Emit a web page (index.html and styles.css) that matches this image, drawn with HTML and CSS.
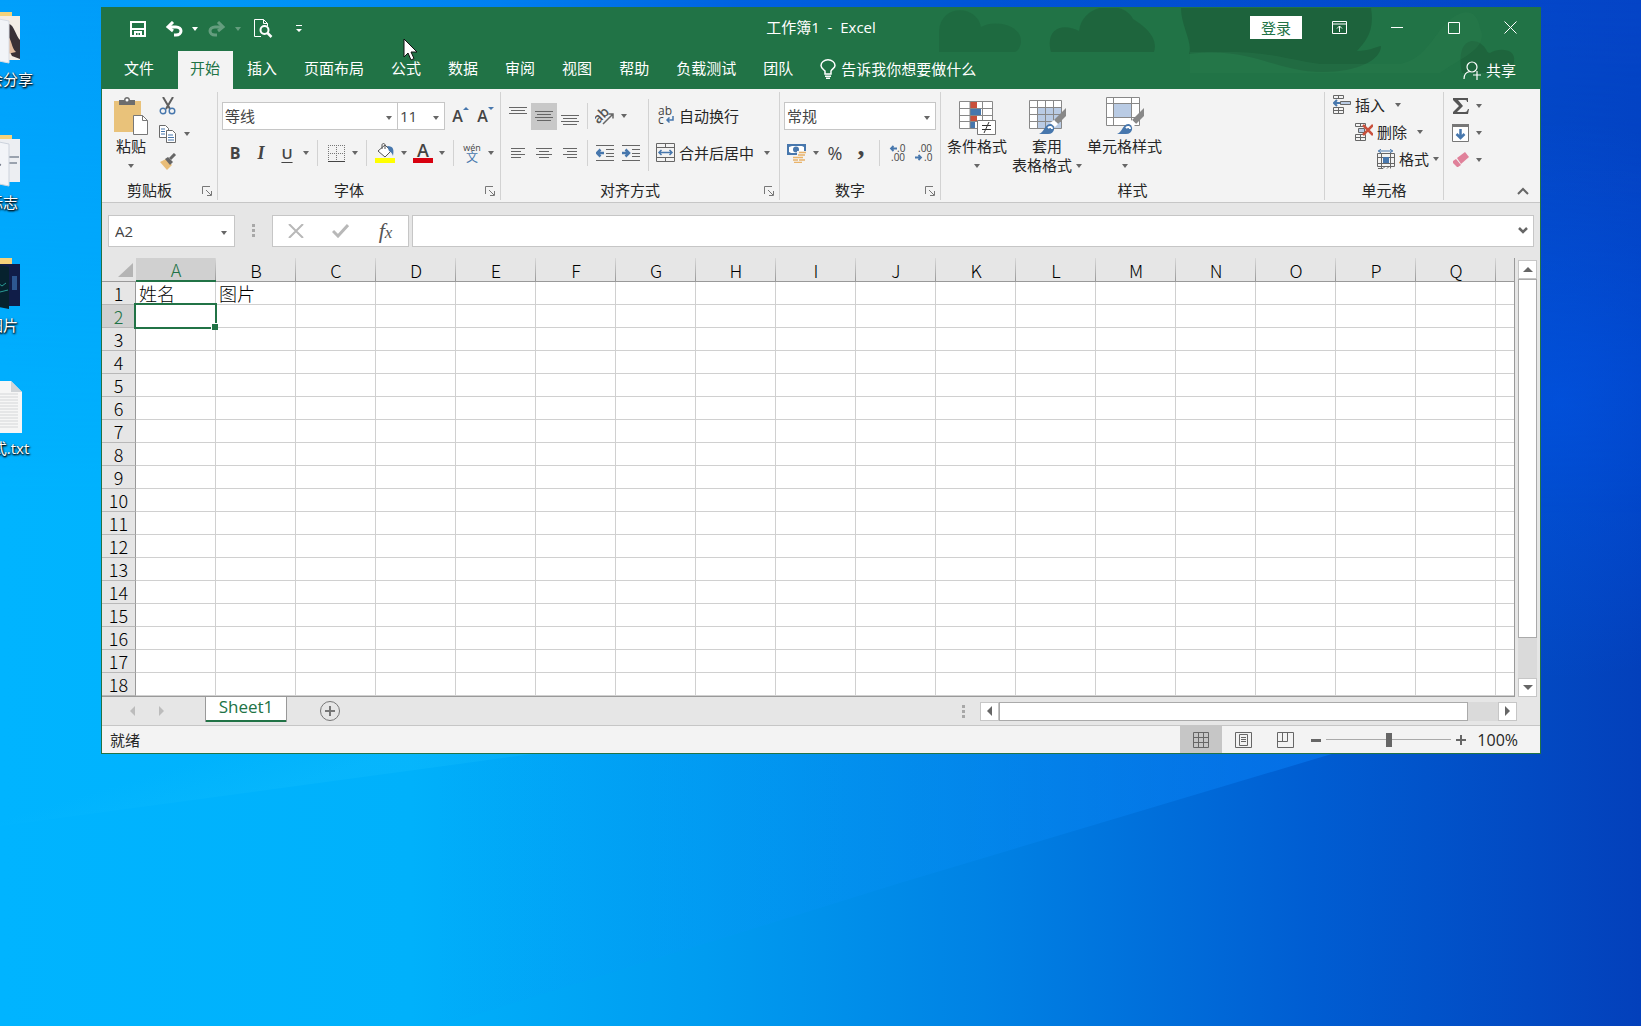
FILE: index.html
```html
<!DOCTYPE html>
<html lang="zh-CN">
<head>
<meta charset="utf-8">
<title>工作簿1 - Excel</title>
<link rel="stylesheet" href="styles.css">
</head>
<body>
<main class="desktop">
  <svg class="wallpaper" viewBox="0 0 1641 1026" preserveAspectRatio="none" aria-hidden="true">
    <defs>
      <linearGradient id="base" x1="0" x2="1" y1="0" y2="0">
        <stop offset="0" stop-color="#00b4ff"/><stop offset=".25" stop-color="#00b1fb"/><stop offset=".43" stop-color="#009cf0"/>
        <stop offset=".6" stop-color="#0082e4"/><stop offset=".8" stop-color="#005dd2"/><stop offset="1" stop-color="#0340bb"/>
      </linearGradient>
      <linearGradient id="top" x1="0" x2="1" y1="0" y2="0">
        <stop offset="0" stop-color="#009ffb"/><stop offset=".12" stop-color="#009af8"/><stop offset=".3" stop-color="#0080f0"/><stop offset=".45" stop-color="#0062e0"/>
        <stop offset=".6" stop-color="#0054d6"/><stop offset="1" stop-color="#0444c6"/>
      </linearGradient>
      <linearGradient id="fade" x1="0" x2="0" y1="0" y2="1">
        <stop offset="0" stop-color="#fff"/><stop offset=".5" stop-color="#000"/>
      </linearGradient>
      <linearGradient id="ray" gradientUnits="userSpaceOnUse" x1="440" y1="0" x2="1335" y2="0">
        <stop offset="0" stop-color="#0a94ff" stop-opacity=".04"/><stop offset=".5" stop-color="#0a94ff" stop-opacity=".2"/><stop offset="1" stop-color="#0a84ff" stop-opacity=".45"/>
      </linearGradient>
      <linearGradient id="ray2" gradientUnits="userSpaceOnUse" x1="280" y1="790" x2="265" y2="740">
        <stop offset="0" stop-color="#1cc4ff" stop-opacity=".22"/><stop offset="1" stop-color="#1cc4ff" stop-opacity="0"/>
      </linearGradient>
      <radialGradient id="glow" gradientUnits="userSpaceOnUse" cx="1560" cy="400" r="280">
        <stop offset="0" stop-color="#0058f0" stop-opacity=".5"/><stop offset="1" stop-color="#0058f0" stop-opacity="0"/>
      </radialGradient>
      <mask id="down"><rect width="1641" height="1026" fill="url(#fade)"/></mask>
    </defs>
    <rect width="1641" height="1026" fill="url(#base)"/>
    <rect width="1641" height="1026" fill="url(#top)" mask="url(#down)"/>
    <rect width="1641" height="1026" fill="url(#glow)"/>
    <path d="M440 1026 900 883 1335 753V700H440z" fill="url(#ray)"/>
    <path d="M0 826 540 753V600H0z" fill="url(#ray2)"/>
  </svg>

  <ul class="shortcuts">
    <li><svg width="64" height="56" viewBox="0 0 64 56"><path d="M10 2h42v40H10z" fill="#f5d27a"/><path d="M34 6h26v44H34z" fill="#f4ece4"/><path d="M49 14c5 1 7 12 11 16v19l-8-3c-5-8-3-22-3-32z" fill="#3a3136"/><path d="M47 26c5 2 4 12 9 16l-9 2z" fill="#e2bda0"/><path d="M14 4l35 7v42l-35-7z" fill="#f2f4f8" stroke="#d8dce4"/></svg><span>年会分享</span></li>
    <li><svg width="64" height="56" viewBox="0 0 64 56"><path d="M10 2h42v40H10z" fill="#f5d27a"/><path d="M34 6h26v43H34z" fill="#eceef2"/><path d="M49 24h10M49 30h8" stroke="#9aa2ae" stroke-width="2"/><path d="M14 4l35 7v42l-35-7z" fill="#f2f4f8" stroke="#ccd2dc"/><path d="M30 20l9 2M33 30l8 2M30 38l9 2" stroke="#7c8290" stroke-width="2"/></svg><span>标志</span></li>
    <li><svg width="64" height="56" viewBox="0 0 64 56"><path d="M10 2h42v40H10z" fill="#f5d27a"/><path d="M34 8h26v42H34z" fill="#101d48"/><path d="M52 20h5v14h-5z" fill="#2d5790"/><path d="M14 4l35 7v42l-35-7z" fill="#06222e"/><path d="M34 24l8 6 4-3M40 36l8-2" stroke="#2a9a96" fill="none"/></svg><span>图片</span></li>
    <li><svg width="64" height="56" viewBox="0 0 64 56"><path d="M16 2h35l11 11v41H16z" fill="#f6f6f6"/><path d="M51 2v11h11z" fill="#d0d4d8"/><path d="M20 15h38M20 18h38M20 21h38M20 24h38M20 27h38M20 30h38M20 33h38M20 36h38M20 39h38M20 42h38M20 45h38M20 48h38" stroke="#d4d6d8"/></svg><span>公式.txt</span></li>
  </ul>

  <section class="window" aria-label="Excel">
    <header class="header">
      <svg class="decor" width="606" height="82" viewBox="935 7 606 82" aria-hidden="true">
        <g fill="#1d633c">
          <path d="M940 51V30c2-28 38-26 42-4 14-8 40-2 40 14 0 6-4 11-6 11z" opacity=".55"/>
          <path d="M1052 51c-6-22 10-30 28-21 4-30 46-30 54-12 10 6 26 18 21 33z" opacity=".85"/>
          <path d="M1182 7h190c4 24-6 34-14 43 12 0 18-4 24-5 0 14-24 26-58 26-50 0-70-26-134-18 4-12-8-28-8-46z"/>
          <path d="M1463 72c-6-30 8-36 18-30 8 6 6 10 10 10 10-6 26-4 24 8 0 6-2 10-4 12z" opacity=".85"/>
        </g>
        <path d="M1191 51h40c40 0 60 8 90 12h80c20-4 30-20 40-34 16-20 36-26 40-2 10 20-20 30-40 45H1191z" fill="#2a7a4c" opacity=".35"/>
      </svg>
      <div class="titlebar">
        <div class="qat">
          <button class="q-save" aria-label="保存"><svg width="16" height="16" viewBox="0 0 16 16" fill="none" stroke="#fff" stroke-width="2"><path d="M1 1h14v14H1zM1 8h14" /><path d="M5 15v-4h6v4" /><path d="M8 12v3" stroke-width="1"/></svg></button>
          <button class="q-main" aria-label="撤消"><svg width="18" height="16" viewBox="0 0 18 16" fill="none" stroke="#fff" stroke-width="3"><path d="M3 6h8c3 0 5 2 5 4s-2 4-5 4H9"/><path d="M8 1 3 6l5 4"/></svg></button><button class="q-arrow" aria-label="撤消列表"><i class="tri"></i></button>
          <button class="q-main dim" aria-label="恢复"><svg width="18" height="16" viewBox="0 0 18 16" fill="none" stroke="#fff" stroke-width="3"><path d="M15 6H7c-3 0-5 2-5 4s2 4 5 4h2"/><path d="M10 1l5 5-5 4"/></svg></button><button class="q-arrow dim" aria-label="恢复列表"><i class="tri"></i></button>
          <button class="q-wide" aria-label="打印预览"><svg width="20" height="19" viewBox="0 0 20 19" fill="none" stroke="#fff"><path d="M8 17.500H1.500V.5h9l4 4V7M10.500.5v4h4"/><circle cx="11.500" cy="11" r="4" stroke-width="2"/><path d="M14.500 14l4 4" stroke-width="2.500"/></svg></button>
          <button class="q-wide" aria-label="自定义快速访问工具栏"><svg width="6" height="8" viewBox="0 0 6 8" fill="#fff"><path d="M0 0h6v1H0zM0 4h6L3 7z"/></svg></button>
        </div>
        <h1>工作簿1&nbsp; -&nbsp; Excel</h1>
        <div class="controls">
          <button class="login">登录</button>
          <button class="ctl" aria-label="功能区显示选项"><svg width="15" height="13" viewBox="0 0 15 13" fill="none" stroke="#fff"><path d="M.5.5h14v12H.5zM.5 3h14M7.500 11V5M5 7.500 7.500 5 10 7.500"/></svg></button>
          <button class="ctl" aria-label="最小化"><svg width="12" height="12" stroke="#fff"><path d="M0 5.500h12"/></svg></button>
          <button class="ctl" aria-label="最大化"><svg width="12" height="12" stroke="#fff" fill="none"><path d="M.5.5h11v11H.5z"/></svg></button>
          <button class="ctl" aria-label="关闭"><svg width="13" height="13" stroke="#fff"><path d="M.5.5l12 12M12.500.5l-12 12"/></svg></button>
        </div>
      </div>
      <nav class="tabs">
        <button class="file">文件</button><button class="active">开始</button><button>插入</button><button>页面布局</button><button>公式</button><button>数据</button><button>审阅</button><button>视图</button><button>帮助</button><button>负载测试</button><button>团队</button>
        <button class="tell"><svg width="16" height="20" viewBox="0 0 16 20" fill="none" stroke="#fff" stroke-width="1.500"><path d="M5 15v-3C3 10 1 9 1 6.500a7 5.700 0 0 1 14 0C15 9 12 10 11 12v3zM5 17.200h6M6 19.200h4"/></svg>告诉我你想要做什么</button>
        <button class="share"><svg width="19" height="19" viewBox="0 0 19 19" fill="none" stroke="#fff" stroke-width="1.200"><circle cx="9" cy="6" r="5"/><path d="M1 18c0-4 2-7 6-7.500M10 14h8M14 10v9"/></svg>共享</button>
      </nav>
    </header>

    <div class="ribbon">
      <section class="group clip">
        <div class="body">
          <button class="big paste"><svg width="36" height="38" viewBox="0 0 36 38"><path d="M1 4h27v31H1z" fill="#e9c27a"/><path d="M6 8V3h5c0-4 6-4 6 0h5v5z" fill="#6d6d6d"/><circle cx="14" cy="3" r="1.500" fill="#fff"/><path d="M20.500 18.500h9l5 5v14h-14z" fill="#fff" stroke="#777"/><path d="M29.500 18.500v5h5" fill="none" stroke="#777"/></svg><span>粘贴</span><i class="tri"></i></button>
          <div class="mini">
            <button aria-label="剪切"><svg width="18" height="18" viewBox="0 0 18 18" fill="none"><path d="M4 0l7 12M14 0 7 12" stroke="#5f5f5f" stroke-width="2"/><circle cx="4" cy="14" r="2.800" stroke="#4777ad" stroke-width="1.400"/><circle cx="13" cy="14" r="2.800" stroke="#4777ad" stroke-width="1.400"/></svg></button>
            <button aria-label="复制"><svg width="18" height="18" viewBox="0 0 18 18" fill="#fff" stroke="#6a6a6a"><path d="M.5.5h6l3 3v9h-9z"/><path d="M7.500 5.500h6l3 3v9h-9z"/><path d="M2 4h4M2 6.500h4M2 9h4M9 10h5M9 12.500h6M9 15h6" stroke="#4777ad"/></svg><i class="tri"></i></button>
            <button aria-label="格式刷"><svg width="18" height="18" viewBox="0 0 18 18"><path d="M1 9l6-3 6 6-5 5z" fill="#e9bd78"/><path d="M6 6l3-2 5 5-3 3z" fill="#666"/><path d="M11 6l5-5" stroke="#666" stroke-width="3"/></svg></button>
          </div>
        </div>
        <footer><span>剪贴板</span><button class="launch" aria-label="剪贴板设置"><svg width="10" height="10" viewBox="0 0 10 10" fill="none" stroke="#777"><path d="M.5 8V.5H8M4 4l5 5M9.500 5v4.500H5"/></svg></button></footer>
      </section>

      <section class="group font">
        <div class="body rows">
          <div class="row">
            <label class="combo face"><select aria-label="字体"><option>等线</option></select><i class="tri"></i></label>
            <label class="combo size"><select aria-label="字号"><option>11</option></select><i class="tri"></i></label>
            <button class="tool grow" aria-label="增大字号">A<svg width="6" height="3"><path d="M0 3h6L3 0z" fill="#4777ad"/></svg></button>
            <button class="tool grow" aria-label="减小字号">A<svg width="6" height="3"><path d="M0 0h6L3 3z" fill="#4777ad"/></svg></button>
          </div>
          <div class="row">
            <button class="tool bold">B</button><button class="tool italic">I</button><button class="tool under">U</button><button class="drop" aria-label="下划线"><i class="tri"></i></button><i class="sep"></i>
            <button class="tool" aria-label="边框"><svg width="17" height="17" viewBox="0 0 17 17" fill="none" stroke="#777" stroke-dasharray="1 1"><path d="M.5 0v16M8.500 0v16M16.500 0v16M0 .5h17M0 8.500h17"/><path d="M0 16.500h17" stroke="#444" stroke-dasharray="none"/></svg></button><button class="drop" aria-label="边框列表"><i class="tri"></i></button><i class="sep"></i>
            <button class="tool" aria-label="填充颜色"><svg width="20" height="20" viewBox="0 0 20 20"><path d="M3 8l7-6 6 6-6 6z" fill="#fff" stroke="#555"/><path d="M7 6V2c0-2 3-2 3 0v4" fill="none" stroke="#555"/><path d="M12 3c7 0 7 4 6 10-1-3-2-4-4-5z" fill="#4777ad"/><path d="M0 15h20v5H0z" fill="#ff0"/></svg></button><button class="drop" aria-label="填充颜色列表"><i class="tri"></i></button>
            <button class="tool color" aria-label="字体颜色"><b>A</b><i></i></button><button class="drop" aria-label="字体颜色列表"><i class="tri"></i></button><i class="sep"></i>
            <button class="tool pinyin"><span>wén</span><b>文</b></button><button class="drop" aria-label="拼音列表"><i class="tri"></i></button>
          </div>
        </div>
        <footer><span>字体</span><button class="launch" aria-label="字体设置"><svg width="10" height="10" viewBox="0 0 10 10" fill="none" stroke="#777"><path d="M.5 8V.5H8M4 4l5 5M9.500 5v4.500H5"/></svg></button></footer>
      </section>

      <section class="group align">
        <div class="body">
          <div class="rows">
            <div class="row">
              <button class="tool" aria-label="顶端对齐"><svg width="18" height="20" stroke="#666"><path d="M0 1.500h18M2 4.500h14M0 7.500h18"/></svg></button><button class="tool on" aria-label="垂直居中"><svg width="18" height="20" stroke="#666"><path d="M0 5.500h18M2 8.500h14M0 11.500h18M2 14.500h14"/></svg></button><button class="tool" aria-label="底端对齐"><svg width="18" height="20" stroke="#666"><path d="M0 9.500h18M2 12.500h14M0 15.500h18M2 18.500h14"/></svg></button><i class="sep"></i>
              <button class="tool" aria-label="方向"><svg width="20" height="20" viewBox="0 0 20 20"><text x="-2" y="14" transform="rotate(-45 6 10)" font-size="14" font-weight="600" fill="#555">ab</text><path d="M8 18 18 8M13.500 8H18v4.500" fill="none" stroke="#666" stroke-width="1.500"/></svg></button><button class="drop" aria-label="方向列表"><i class="tri"></i></button>
            </div>
            <div class="row">
              <button class="tool" aria-label="左对齐"><svg width="14" height="12" stroke="#666"><path d="M0 1.500h14M0 4.500h10M0 7.500h14M0 10.500h10"/></svg></button><button class="tool" aria-label="居中"><svg width="16" height="12" stroke="#666"><path d="M0 1.500h16M3 4.500h10M0 7.500h16M3 10.500h10"/></svg></button><button class="tool" aria-label="右对齐"><svg width="14" height="12" stroke="#666"><path d="M0 1.500h14M4 4.500h10M0 7.500h14M4 10.500h10"/></svg></button><i class="sep"></i>
              <button class="tool" aria-label="减少缩进"><svg width="18" height="16" viewBox="0 0 18 16"><path d="M0 .5h18M10 4.500h8M10 8.500h8M10 11.500h8M0 15.500h18" stroke="#666"/><path d="M8 8H2M4.500 4.500 1 8l3.500 3.500" fill="none" stroke="#4777ad" stroke-width="2.500"/></svg></button>
              <button class="tool" aria-label="增加缩进"><svg width="18" height="16" viewBox="0 0 18 16"><path d="M0 .5h18M10 4.500h8M10 8.500h8M10 11.500h8M0 15.500h18" stroke="#666"/><path d="M0 8h6M3.500 4.500 7 8l-3.500 3.500" fill="none" stroke="#4777ad" stroke-width="2.500"/></svg></button>
            </div>
          </div>
          <i class="divider"></i>
          <div class="rows wraps">
            <button class="row"><svg width="20" height="20" viewBox="0 0 20 20"><text x="2" y="9" font-size="12" fill="#444">ab</text><text x="2" y="18" font-size="12" fill="#444">c</text><path d="M17 10v4h-6M13.500 11.500 11 14l2.500 2.500" fill="none" stroke="#4777ad" stroke-width="1.500"/></svg><span>自动换行</span></button>
            <button class="row"><svg width="20" height="20" viewBox="0 0 20 20" fill="none" stroke="#666"><path d="M.5.500h18v18H.5zM.5 4.500h18M.5 14.500h18M9.500.5v4M9.500 14.500v4"/><path d="M3 9.500h13M5.500 7 3 9.500 5.500 12M13.500 7 16 9.500 13.500 12" stroke="#4777ad" stroke-width="1.500"/></svg><span>合并后居中</span><i class="tri"></i></button>
          </div>
        </div>
        <footer><span>对齐方式</span><button class="launch" aria-label="对齐设置"><svg width="10" height="10" viewBox="0 0 10 10" fill="none" stroke="#777"><path d="M.5 8V.5H8M4 4l5 5M9.500 5v4.500H5"/></svg></button></footer>
      </section>

      <section class="group number">
        <div class="body rows">
          <div class="row"><label class="combo format"><select aria-label="数字格式"><option>常规</option></select><i class="tri"></i></label></div>
          <div class="row">
            <button class="tool" aria-label="会计数字格式"><svg width="20" height="20" viewBox="0 0 20 20"><path d="M0 1h19v11H0z" fill="#4777ad"/><path d="M2 4l3-1h10l2 1v5l-2 1H4L2 9z" fill="#fff"/><circle cx="9" cy="6.500" r="3" fill="#4777ad"/><path d="M10 8h9v11h-8v-2H6v-5h4z" fill="#f3f3f3"/><path d="M12 9.500h7M11 12h7M6 14.500h10M6 17h5M12 17h6M7 19.500h8" stroke="#e9b36a" stroke-width="1.500"/></svg></button><button class="drop" aria-label="会计格式列表"><i class="tri"></i></button>
            <button class="tool percent">%</button><button class="tool comma">,</button><i class="sep"></i>
            <button class="tool" aria-label="增加小数位数"><svg width="18" height="18" viewBox="0 0 18 18" fill="#444" font-size="10"><text x="8" y="8">.0</text><text x="2" y="17">.00</text><path d="M8 4.500H2M4.500 2 2 4.500 4.500 7" fill="none" stroke="#4777ad" stroke-width="1.800"/></svg></button>
            <button class="tool" aria-label="减少小数位数"><svg width="18" height="18" viewBox="0 0 18 18" fill="#444" font-size="10"><text x="3" y="8">.00</text><text x="9" y="17">.0</text><path d="M0 13.500h6M3.500 11 6 13.500 3.500 16" fill="none" stroke="#4777ad" stroke-width="1.800"/></svg></button>
          </div>
        </div>
        <footer><span>数字</span><button class="launch" aria-label="数字设置"><svg width="10" height="10" viewBox="0 0 10 10" fill="none" stroke="#777"><path d="M.5 8V.5H8M4 4l5 5M9.500 5v4.500H5"/></svg></button></footer>
      </section>

      <section class="group styles">
        <div class="body">
          <button class="big"><svg width="38" height="38" viewBox="0 0 38 38"><path d="M1.500 4.500h33v27h-33z" fill="#fff"/><path d="M12 5h7v6h-7zM12 18h7v6h-7z" fill="#c9503c"/><path d="M12 11h11v7H12zM12 24h5v7h-5z" fill="#4777ad"/><path d="M1.500 4.500h33v27h-33zM1.500 11.500h33M1.500 18.500h33M1.500 24.500h33M12 4.500v27M24.500 4.500v27" fill="none" stroke="#888"/><path d="M19.500 23.500h18v14h-18z" fill="#fff" stroke="#777"/><path d="M24 28.500h9M24 32.500h9M31 25l-5 11" stroke="#333" fill="none"/></svg><span>条件格式</span><i class="tri"></i></button>
          <button class="big"><svg width="38" height="38" viewBox="0 0 38 38"><path d="M1.500 3.500h32v28h-32z" fill="#fff"/><path d="M9 11h24v20H9z" fill="#b9cbe4"/><path d="M1.500 3.500h32v28h-32zM1.500 10.500h32M1.500 17.500h32M1.500 24.500h32M9.500 3.500v28M17.500 3.500v28M25.500 3.500v28" fill="none" stroke="#888"/><path d="M38 11v8l-8 8-4-4z" fill="#888"/><path d="M26 23l4 4-3 3-5-4z" fill="#fff"/><path d="M11 37c6-2 5-10 12-10 5 2 4 10-3 10z" fill="#4777ad"/><path d="M20 31c2-2 4-1 4 1" stroke="#fff" stroke-width="2" fill="none"/></svg><span>套用</span><span class="inline">表格格式<i class="tri"></i></span></button>
          <button class="big"><svg width="38" height="38" viewBox="0 0 38 38"><path d="M.5.500h33v28H.5z" fill="#fff"/><path d="M8 7h18v14H8z" fill="#b9cbe4"/><path d="M.5.500h33v28H.5zM.5 6.500h33M.5 20.500h33M7.500.5v28M25.500.5v28" fill="none" stroke="#888"/><path d="M38 11v8l-8 8-4-4z" fill="#888"/><path d="M26 23l4 4-3 3-5-4z" fill="#fff"/><path d="M11 37c6-2 5-10 12-10 5 2 4 10-3 10z" fill="#4777ad"/><path d="M20 31c2-2 4-1 4 1" stroke="#fff" stroke-width="2" fill="none"/></svg><span>单元格样式</span><i class="tri"></i></button>
        </div>
        <footer><span>样式</span></footer>
      </section>

      <section class="group cells">
        <div class="body">
          <button><svg width="18" height="20" viewBox="0 0 18 20" fill="none" stroke="#666"><path d="M.5.500h10v3H.5zM5.500.5v3M.5 12.500h10v6H.5zM5.500 12.500v6M.5 15.500h10"/><path d="M7.500 6.500h10v3h-10z" fill="#b9cbe4"/><path d="M7 8H1M4 5 1 8l3 3" stroke="#4777ad" stroke-width="2"/></svg><span>插入</span><i class="tri"></i></button>
          <button><svg width="18" height="20" viewBox="0 0 18 20" fill="none" stroke="#666"><path d="M.5 1.500h10v3H.5zM5.500 1.500v3M.5 12.500h10v6H.5zM5.500 12.500v6M.5 15.500h10"/><path d="M3.500 6.500h6v4h-6z" fill="#b9cbe4"/><path d="M8 3l10 10M18 3 8 13" stroke="#c9503c" stroke-width="2.500"/></svg><span>删除</span><i class="tri"></i></button>
          <button><svg width="18" height="20" viewBox="0 0 18 20" fill="none" stroke="#666"><path d="M1 2h15M4 0 1.500 2 4 4M13 0l2.500 2L13 4" stroke="#4777ad"/><path d="M.5 4.500h17v13H.5zM4.500 4.500v15M13.500 4.500v15M.5 8.500h17M.5 14.500h17M1 19.500h5l2-2h4l-2 2"/><path d="M6 8h6v6H6z" fill="#4777ad" stroke="none"/></svg><span>格式</span><i class="tri"></i></button>
        </div>
        <footer><span>单元格</span></footer>
      </section>

      <section class="group edit">
        <div class="body">
          <button aria-label="自动求和"><svg width="18" height="18" viewBox="0 0 18 18"><path d="M1 1h15v4h-1c0-2-1-2-3-2H6l5 6-6 6h8c2 0 2-1 3-3h1l-1 5H1v-2l6-6-6-6z" fill="#555"/></svg><i class="tri"></i></button>
          <button aria-label="填充"><svg width="18" height="18" viewBox="0 0 18 18"><path d="M.5.500h16v17H.5z" fill="#fff" stroke="#777"/><path d="M0 0h17v3H0z" fill="#777"/><path d="M8.500 5v9M4.500 10l4 4 4-4" fill="none" stroke="#4777ad" stroke-width="2.500"/></svg><i class="tri"></i></button>
          <button aria-label="清除"><svg width="18" height="18" viewBox="0 0 18 18"><path d="M5 7l8-6 4 5-8 7z" fill="#e0819a"/><path d="M4 8l5 6-3 2H5l-4-4v-2z" fill="#e0819a"/></svg><i class="tri"></i></button>
        </div>
        <footer><button class="collapse" aria-label="折叠功能区"><svg width="12" height="8" fill="none" stroke="#666" stroke-width="2"><path d="M1 7l5-5 5 5"/></svg></button></footer>
      </section>
    </div>

    <div class="formula">
      <label class="combo name"><input value="A2" aria-label="名称框"><i class="tri"></i></label>
      <svg class="grip" width="3" height="13" fill="#a8a8a8" aria-hidden="true"><path d="M0 0h3v3H0zM0 5h3v3H0zM0 10h3v3H0z"/></svg>
      <div class="fx">
        <button aria-label="取消"><svg width="16" height="14" stroke="#b8b8b8" stroke-width="2"><path d="M1 0l14 14M15 0 1 14"/></svg></button>
        <button aria-label="输入"><svg width="17" height="14" fill="none" stroke="#b8b8b8" stroke-width="3"><path d="M1 7l5 5L16 1"/></svg></button>
        <button class="fn"><i>f</i><i>x</i></button>
      </div>
      <div class="entry"><input aria-label="编辑栏"><button aria-label="展开编辑栏"><svg width="10" height="7" fill="none" stroke="#666" stroke-width="2.500"><path d="M1 1l4 4 4-4"/></svg></button></div>
    </div>

    <div class="sheet">
      <table>
        <thead><tr id="letters"><th class="corner"><svg width="15" height="14"><path d="M15 0v14H0z" fill="#b4b4b4"/></svg></th></tr></thead>
        <tbody id="grid"></tbody>
      </table>
      <div class="vscroll">
        <button aria-label="向上滚动"><svg width="10" height="5"><path d="M0 5h10L5 0z" fill="#666"/></svg></button>
        <div class="track"><i></i></div>
        <button aria-label="向下滚动"><svg width="10" height="5"><path d="M0 0h10L5 5z" fill="#666"/></svg></button>
      </div>
    </div>

    <div class="sheetbar">
      <div class="nav"><button aria-label="上一个工作表"><svg width="5" height="10"><path d="M5 0v10L0 5z" fill="#bcbcbc"/></svg></button><button aria-label="下一个工作表"><svg width="5" height="10"><path d="M0 0v10l5-5z" fill="#bcbcbc"/></svg></button></div>
      <button class="tab">Sheet1</button>
      <button class="add" aria-label="新工作表"><svg width="20" height="20" fill="none" stroke="#777"><circle cx="10" cy="10" r="9.500"/><path d="M5 10h10M10 5v10" stroke-width="2"/></svg></button>
      <svg class="grip" width="3" height="13" fill="#a8a8a8" aria-hidden="true"><path d="M0 0h3v3H0zM0 5h3v3H0zM0 10h3v3H0z"/></svg>
      <div class="hscroll">
        <button aria-label="向左滚动"><svg width="5" height="10"><path d="M5 0v10L0 5z" fill="#666"/></svg></button>
        <div class="track"><i></i></div>
        <button aria-label="向右滚动"><svg width="5" height="10"><path d="M0 0v10l5-5z" fill="#666"/></svg></button>
      </div>
    </div>

    <footer class="status">
      <span class="ready">就绪</span>
      <button class="view on" aria-label="普通"><svg width="17" height="16" fill="none" stroke="#666"><path d="M.5.500h15v15H.5zM.5 5.500h15M.5 10.500h15M5.500.5v15M10.500.5v15"/></svg></button>
      <button class="view" aria-label="页面布局"><svg width="17" height="16" fill="none" stroke="#666"><path d="M.5.500h16v15H.5zM4.500 2.500h8v11h-8zM6 5.500h5M6 7.500h5M6 9.500h5"/></svg></button>
      <button class="view" aria-label="分页预览"><svg width="17" height="16" fill="none" stroke="#666"><path d="M.5.500h16v15H.5zM.5 9.500h10V.5M5.500.5v9"/></svg></button>
      <button class="zoom" aria-label="缩小"><svg width="10" height="10"><path d="M0 4h10v3H0z" fill="#666"/></svg></button>
      <input type="range" min="0" max="100" value="50" aria-label="显示比例">
      <button class="zoom" aria-label="放大"><svg width="10" height="10"><path d="M0 4h10v2H0zM4 0h2v10H4z" fill="#666"/></svg></button>
      <button class="level">100%</button>
    </footer>
  </section>

  <svg class="pointer" width="15" height="23" viewBox="0 0 15 23" aria-hidden="true"><path d="M1 1v18l4-4 3 7 3-1.500-3-6.500h6z" fill="#fff" stroke="#111"/></svg>
</main>
<script src="grid.js"></script>
</body>
</html>
```
FILE: grid.js
```js
const columns = 'ABCDEFGHIJKLMNOPQ'.split('').concat('');
const values = { A1: '姓名', B1: '图片' };
const selected = 'A2';

const letters = document.getElementById('letters');
for (const name of columns) {
  const th = document.createElement('th');
  th.textContent = name;
  if (name && selected.startsWith(name)) th.className = 'current';
  letters.append(th);
}

const grid = document.getElementById('grid');
for (let n = 1; n <= 18; n++) {
  const tr = grid.insertRow();
  const th = document.createElement('th');
  th.textContent = n;
  if (selected.slice(1) === String(n)) th.className = 'current';
  tr.append(th);
  for (const name of columns) {
    const td = tr.insertCell();
    td.textContent = values[name + n] || '';
    if (name + n === selected) {
      td.className = 'selected';
      td.append(document.createElement('i'));
    }
  }
}
```
FILE: styles.css
```css
* { box-sizing: border-box; }

:root {
  --green: #217346;
  --line: #c6c6c6;
  --ui: "Open Sans", "Noto Sans CJK SC", sans-serif;
}

body {
  margin: 0;
  font: 15px/20px var(--ui);
  color: #262626;
}

button, input, select {
  font: inherit;
  color: inherit;
  border: 0;
  margin: 0;
  padding: 0;
  background: none;
  border-radius: 0;
}

button {
  display: flex;
  align-items: center;
  justify-content: center;
  white-space: nowrap;
}

svg { display: block; flex: none; }

.desktop {
  position: relative;
  min-height: 100vh;
  overflow: hidden;
  background: #0078d7;
}

.wallpaper {
  position: absolute;
  inset: 0;
  width: 100%;
  height: 100%;
}

.pointer { position: absolute; left: 403px; top: 38px; }

/* desktop shortcuts */
.shortcuts {
  position: absolute;
  left: -47px;
  top: 10px;
  width: 100px;
  margin: 0;
  padding: 0;
  list-style: none;
  display: grid;
  grid-auto-rows: 123px;
  color: #fff;
  text-shadow: 1px 1px 2px #000, 0 1px 2px #000;
}
.shortcuts li { display: flex; flex-direction: column; align-items: center; gap: 3px; }
.shortcuts svg { margin-right: 22px; }

/* window */
.window {
  position: absolute;
  left: 101px;
  right: 100px;
  top: 7px;
  border: 1px solid var(--green);
  background: #e6e6e6;
}

.header { position: relative; background: var(--green); color: #fff; }
.decor { position: absolute; right: 0; top: 0; }

.titlebar {
  position: relative;
  display: grid;
  grid-template-columns: 1fr auto 1fr;
  height: 43px;
}
.titlebar h1 { margin: 9px 0 0; font: inherit; }

.qat { display: flex; padding-left: 15px; height: 41px; }
.q-save { width: 42px; }
.q-main { width: 29px; }
.q-arrow { width: 14px; }
.q-wide { width: 36px; }
.dim { opacity: .3; }

.tri {
  flex: none;
  width: 0;
  border: 3px solid transparent;
  border-top: 4px solid #666;
  border-bottom: 0;
}
.header .tri { border-top-color: #fff; }

.controls { display: flex; justify-content: flex-end; height: 39px; align-items: center; padding-right: 1px; }
.login { width: 52px; height: 23px; background: #fff; color: var(--green); margin-right: 9px; }
.ctl { width: 57px; height: 39px; }

.tabs { position: relative; display: flex; gap: 1px; height: 38px; padding-left: 9px; }
.tabs button { padding: 0 13px 4px; }
.tabs .file { margin-right: 10px; }
.tabs .active { background: #f3f3f3; color: var(--green); padding-left: 12px; }
.tabs .tell { gap: 5px; padding-bottom: 2px; }
.tabs .share { margin-left: auto; padding: 0 24px 0 0; gap: 4px; }

/* ribbon */
.ribbon {
  display: flex;
  padding: 3px 0 2px;
  background: #f3f3f3;
  border-bottom: 1px solid var(--line);
}
.group {
  display: flex;
  flex-direction: column;
  border-right: 1px solid #d2d2d2;
}
.group footer { display: flex; height: 20px; justify-content: center; }
.group footer span { flex: 1; text-align: center; }
.launch { width: 20px; height: 22px; }
.body { height: 88px; display: flex; }

.clip { width: 116px; }
.font { width: 283px; }
.align { width: 279px; }
.number { width: 161px; }
.styles { flex: 1; }
.cells { width: 119px; }
.edit { width: 96px; border-right: 0; }

.big { flex-direction: column; justify-content: flex-start; padding-top: 5px; }
.big span { line-height: 19px; margin-top: 2px; }
.big span + span { margin-top: 0; }
.big .tri { margin-top: 8px; }
.big .inline { display: flex; align-items: center; gap: 4px; }
.big .inline .tri { margin-top: 0; }
.paste { margin-left: 9px; width: 40px; }

.mini { margin-left: 8px; display: grid; grid-template-rows: repeat(3, 28px); }
.mini button { justify-content: flex-start; gap: 7px; }

.rows { display: flex; flex-direction: column; gap: 9px; padding: 10px 0 0 4px; }
.row { display: flex; align-items: center; height: 28px; }

.combo {
  position: relative;
  display: block;
  height: 28px;
  background: #fff;
  border: 1px solid var(--line);
}
.combo select, .combo input {
  appearance: none;
  width: 100%;
  height: 100%;
  padding: 0 2px;
  color: #444;
}
.combo .tri { position: absolute; right: 5px; top: 50%; }
.face { width: 176px; }
.size { width: 47px; border-left: 0; }
.format { width: 152px; }

.tool { width: 26px; height: 27px; color: #444; }
.tool.on { background: #c8c8c8; }
.drop { width: 12px; height: 27px; }
.sep { width: 1px; height: 26px; margin: 0 5px; background: #d2d2d2; }
.align .sep { margin: 0 4px; }
.grow { align-items: flex-start; width: 25px; font-size: 16px; font-weight: 600; line-height: 26px; }
.size + .grow { margin-left: 3px; }
.grow svg { margin-top: 4px; }
.bold { font-weight: 700; font-size: 16px; }
.italic { font: italic 700 18px "Liberation Serif", serif; }
.under { font-weight: 600; text-decoration: underline; text-underline-offset: 3px; }
.color { flex-direction: column; }
.color b { font-size: 18px; line-height: 15px; font-weight: 600; }
.color i { width: 20px; height: 5px; background: #d8000f; }
.pinyin { flex-direction: column; font-size: 9px; line-height: 9px; }
.pinyin b { font-size: 12px; line-height: 12px; font-weight: 400; color: #4777ad; }
.percent { font-size: 18px; }
.comma { font: 700 28px/10px "Liberation Serif", serif; padding-bottom: 14px; }

.divider { width: 1px; height: 72px; margin: 7px 0 0 4px; background: #d2d2d2; }
.wraps { padding-left: 7px; }
.wraps .row { justify-content: flex-start; gap: 3px; }
.wraps .tri { margin-left: 7px; }
.align svg text, .number svg text { font-family: var(--ui); }

.styles .body { padding-left: 6px; gap: 5px; }

.cells .body, .edit .body { display: grid; grid-template-rows: repeat(3, 27px); }
.cells .body { padding-left: 8px; }
.edit .body { padding-left: 8px; }
.cells button, .edit .body button { justify-content: flex-start; gap: 4px; }
.cells .body button { padding-bottom: 2px; }
.cells .tri { margin-left: 6px; }
.cells button:nth-child(2) { margin-left: 22px; }
.cells button:nth-child(3) { margin-left: 44px; }
.cells button:nth-child(3) .tri { margin-left: 0; }
.edit button .tri { margin-left: 2px; }
.edit footer { justify-content: flex-end; padding-right: 11px; }
.collapse { height: 22px; }

/* formula bar */
.formula { display: flex; align-items: center; height: 55px; padding: 0 6px 0 6px; }
.name { width: 127px; height: 32px; }
.name input { padding-left: 6px; }
.name .tri { right: 7px; }
.grip { margin: 0 17px; }
.fx { display: flex; width: 137px; height: 32px; background: #fff; border: 1px solid var(--line); }
.fx button { flex: 1; }
.fn { font: 22px/30px "Liberation Serif", serif; color: #555; }
.fn i + i { font-size: 17px; line-height: 20px; padding-top: 4px; }
.entry { flex: 1; display: flex; height: 32px; margin-left: 3px; background: #fff; border: 1px solid var(--line); }
.entry input { flex: 1; min-width: 0; padding: 0 6px; }
.entry button { width: 20px; }

/* worksheet */
.sheet { display: flex; gap: 3px; padding-right: 3px; }
table {
  flex: 1;
  width: 0;
  table-layout: fixed;
  border-collapse: separate;
  border-spacing: 0;
  background: #fff;
  border-right: 1px solid #999;
  border-bottom: 1px solid #999;
  font: 300 18px/22px "Noto Sans CJK SC", sans-serif;
  color: #000;
}
th, td { padding: 0; height: 23px; overflow: hidden; white-space: nowrap; }
th { font-weight: 300; background: #e6e6e6; }
thead th {
  width: 80px;
  border-bottom: 1px solid #999;
  background: linear-gradient(to bottom, #d8d8d8, #999) right / 1px 100% no-repeat #e6e6e6;
}
thead th:last-child { width: auto; background: #e6e6e6; }
thead .corner { width: 34px; background: #e6e6e6; }
.corner svg { margin: 1px 3px 0 auto; }
tbody th { border-right: 1px solid #999; border-bottom: 1px solid #b8b8b8; }
td { border-right: 1px solid #d0d0d0; border-bottom: 1px solid #d0d0d0; padding-left: 3px; }
td:last-child { border-right: 0; }
th.current { background-color: #d0d0d0; color: var(--green); }
thead th.current { border-bottom: 2px solid var(--green); }
td.selected { position: relative; overflow: visible; }
.selected i { position: absolute; inset: -2px; border: 2px solid var(--green); }
.selected i::after {
  content: "";
  position: absolute;
  right: -3px;
  bottom: -3px;
  width: 6px;
  height: 6px;
  background: var(--green);
  border: 1px solid #fff;
  border-width: 1px 0 0 1px;
}

.vscroll { display: flex; flex-direction: column; width: 19px; padding-top: 2px; }
.vscroll button { height: 19px; background: #fff; border: 1px solid var(--line); }
.track { display: flex; flex: 1; background: #dadada; }
.vscroll .track { flex-direction: column; }
.vscroll i { height: 90%; background: #fff; border: 1px solid #aaa; }

.sheetbar {
  display: flex;
  align-items: center;
  height: 29px;
  padding-right: 23px;
  border-bottom: 1px solid var(--line);
}
.nav { display: flex; width: 103px; padding-left: 16px; }
.nav button { width: 29px; height: 20px; }
.tab {
  align-self: flex-start;
  width: 82px;
  height: 25px;
  padding-bottom: 6px;
  background: #fff;
  color: var(--green);
  font-size: 17px;
  border: solid #999;
  border-width: 0 1px;
  box-shadow: inset 0 -2px var(--green);
}
.add { margin: 0 auto 0 33px; }
.sheetbar .grip { margin: 0 15px; }
.hscroll { display: flex; width: 537px; height: 19px; }
.hscroll button { width: 19px; background: #fff; border: 1px solid var(--line); }
.hscroll i { width: 94%; background: #fff; border: 1px solid #aaa; }

.status { display: flex; align-items: center; height: 27px; padding: 0 22px 0 8px; background: #f3f3f3; }
.ready { flex: 1; }
.view { width: 42px; height: 27px; }
.view.on { background: #c6c6c6; }
.zoom { width: 20px; height: 20px; }
.status input {
  appearance: none;
  width: 125px;
  height: 14px;
  background: linear-gradient(#aaa, #aaa) center / 100% 1px no-repeat;
}
.status input::-webkit-slider-thumb { appearance: none; width: 6px; height: 14px; background: #666; }
.level { margin-left: 6px; font-size: 16px; }
```
